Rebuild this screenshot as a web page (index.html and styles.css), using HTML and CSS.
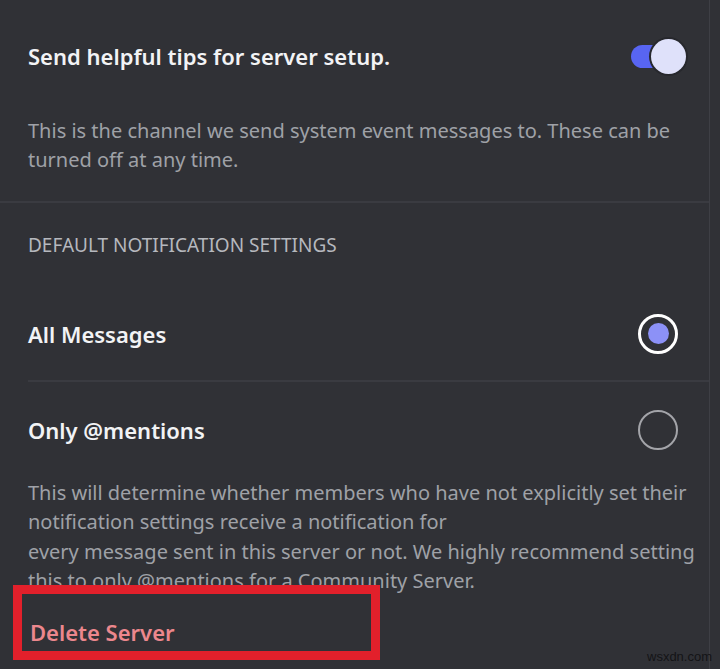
FILE: index.html
```html
<!DOCTYPE html>
<html lang="en">
<head>
<meta charset="utf-8">
<title>Server Settings</title>
<link rel="stylesheet" href="styles.css">
</head>
<body>
<div class="screen">
  <main class="panel">
    <div class="toggle-row">
      <span class="row-title">Send helpful tips for server setup.</span>
      <span class="toggle">
        <span class="toggle-track"></span>
        <span class="toggle-knob"></span>
      </span>
    </div>
    <p class="desc">This is the channel we send system event messages to. These can be<br>turned off at any time.</p>
    <div class="divider"></div>
    <h2 class="section-title">DEFAULT NOTIFICATION SETTINGS</h2>
    <div class="option option-first">
      <span class="row-title">All Messages</span>
      <span class="radio radio-on"><span class="radio-dot"></span></span>
    </div>
    <div class="divider divider-inset"></div>
    <div class="option option-second">
      <span class="row-title">Only @mentions</span>
      <span class="radio radio-off"></span>
    </div>
    <p class="desc desc-notify">This will determine whether members who have not explicitly set their<br>notification settings receive a notification for<br>every message sent in this server or not. We highly recommend setting<br>this to only @mentions for a Community Server.</p>
    <div class="danger">Delete Server</div>
  </main>
  <div class="highlight-box"></div>
  <div class="watermark">wsxdn.com</div>
</div>
</body>
</html>
```
FILE: styles.css
```css
html, body {
  margin: 0;
  padding: 0;
  background: #303136;
}
.screen {
  position: relative;
  width: 720px;
  height: 669px;
  overflow: hidden;
  background: #303136;
  font-family: "Noto Sans", "Open Sans", sans-serif;
}
.panel {
  width: 710px;
  height: 669px;
  box-sizing: border-box;
  border-right: 1px solid #3e3f45;
}
.toggle-row {
  height: 112px;
  padding: 0 23px 0 28px;
  display: flex;
  align-items: center;
  justify-content: space-between;
}
.row-title {
  font-size: 22px;
  font-weight: 600;
  color: #f2f3f5;
  line-height: 30px;
}
.toggle {
  position: relative;
  width: 55px;
  height: 35px;
  flex: none;
}
.toggle-track {
  position: absolute;
  left: 0;
  top: 6px;
  width: 42px;
  height: 23px;
  border-radius: 12px;
  background: #5865f2;
}
.toggle-knob {
  position: absolute;
  right: 0;
  top: 0;
  width: 35px;
  height: 35px;
  border-radius: 50%;
  background: #dfe1fa;
  box-shadow: 0 0 0 2px #27282d;
}
.desc {
  margin: 4px 0 0;
  padding: 0 18px 27px 28px;
  font-size: 20px;
  line-height: 29px;
  color: #9fa1a7;
  white-space: nowrap;
}
.divider {
  height: 2px;
  background: #3a3b41;
}
.divider-inset {
  margin-left: 28px;
}
.section-title {
  margin: 32px 0 0;
  padding: 0 28px 32px;
  font-size: 19px;
  font-weight: 400;
  line-height: 20px;
  color: #b6b8be;
}
.option {
  display: flex;
  align-items: center;
  justify-content: space-between;
  padding: 0 31px 0 28px;
}
.option-first {
  height: 93px;
}
.option-second {
  height: 96px;
}
.radio {
  width: 40px;
  height: 40px;
  box-sizing: border-box;
  border-radius: 50%;
  display: flex;
  align-items: center;
  justify-content: center;
  flex: none;
}
.radio-on {
  border: 3px solid #ffffff;
}
.radio-dot {
  width: 21px;
  height: 21px;
  border-radius: 50%;
  background: #8c91f7;
}
.radio-off {
  border: 2.5px solid #a3a4a9;
}
.desc-notify {
  margin: 0;
  padding: 0 0 0 28px;
  line-height: 29.4px;
}
.danger {
  margin-top: 21px;
  padding: 0 30px;
  font-size: 22px;
  font-weight: 600;
  line-height: 30px;
  color: #ec878d;
}
.highlight-box {
  position: absolute;
  left: 13px;
  top: 585px;
  width: 367px;
  height: 75px;
  box-sizing: border-box;
  border: 9px solid #e2202b;
}
.watermark {
  position: absolute;
  left: 647px;
  top: 649px;
  font-family: "Liberation Sans", Arial, sans-serif;
  font-size: 13px;
  color: #141416;
}
```
